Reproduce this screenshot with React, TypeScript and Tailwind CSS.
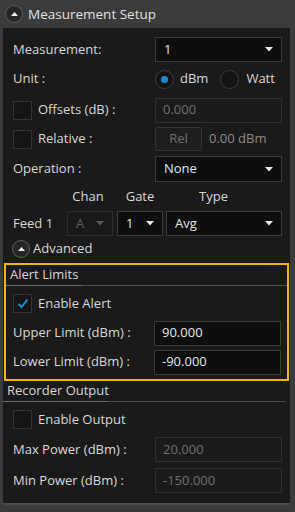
import React from 'react';

const Caret = ({ dim = false }: { dim?: boolean }) => (
    <svg width="8" height="5" viewBox="0 0 8 5" className="shrink-0">
        <path d="M0 0 L8 0 L4 4.5 Z" fill={dim ? '#5a5a5a' : '#e8e8e8'} />
    </svg>
);

const Select = ({ value, className = '', dim = false }: { value: string; className?: string; dim?: boolean }) => (
    <div
        className={`flex items-center justify-between border px-[8px] ${dim ? 'bg-[#191919] border-[#2c2c2c] text-[#5e5e5e]' : 'bg-[#0e0e0e] border-[#3a3a3a] text-[#e6e6e6]'} ${className}`}
    >
        <span>{value}</span>
        <Caret dim={dim} />
    </div>
);

const Field = ({ value, disabled = false }: { value: string; disabled?: boolean }) => (
    <div
        className={`w-[127px] h-[25px] flex items-center border px-[7px] ${disabled ? 'bg-[#1b1b1b] border-[#2f2f2f] text-[#6f6f6f]' : 'bg-[#0e0e0e] border-[#3a3a3a] text-[#e6e6e6]'}`}
    >
        {value}
    </div>
);

const Check = ({ checked = false }: { checked?: boolean }) => (
    <div className="w-[19px] h-[19px] bg-[#151515] border border-[#343434] flex items-center justify-center shrink-0">
        {checked && (
            <svg width="12" height="11" viewBox="0 0 12 11">
                <path d="M1.5 6 L4.5 9 L10.5 1.5" stroke="#1e8fd6" strokeWidth="2" fill="none" />
            </svg>
        )}
    </div>
);

const Radio = ({ on = false }: { on?: boolean }) => (
    <div className="w-[19px] h-[19px] rounded-full bg-[#141414] border border-[#3c3c3c] flex items-center justify-center shrink-0">
        {on && <div className="w-[7px] h-[7px] rounded-full bg-[#1d8ad0]" />}
    </div>
);

const CircleUp = () => (
    <div className="w-[18px] h-[18px] rounded-full bg-[#262626] border border-[#5c5c5c] flex items-center justify-center shrink-0">
        <svg width="7" height="4" viewBox="0 0 7 4">
            <path d="M0 4 L7 4 L3.5 0 Z" fill="#f0f0f0" />
        </svg>
    </div>
);

const SectionTitle = ({ text, tab }: { text: string; tab: string }) => (
    <div className="h-[21px] flex flex-col">
        <div className="flex-1 flex items-center pl-[4px] text-[#d6d6d6]">{text}</div>
        <div className="flex h-px">
            <div className={`${tab} bg-[#6a6a6a]`} />
            <div className="flex-1 bg-[#4c4c4c]" />
        </div>
    </div>
);

export default function App() {
    return (
        <div
            className="w-[295px] h-[512px] bg-[#3b3b3b] text-[13px] text-[#d8d8d8] overflow-hidden"
            style={{ fontFamily: '"Open Sans", "Liberation Sans", sans-serif' }}
        >
            {/* Header */}
            <div className="h-[28px] flex items-center pl-[5px] gap-[5px]">
                <CircleUp />
                <span className="text-[#e0e0e0] text-[13.5px]">Measurement Setup</span>
            </div>

            {/* Panel */}
            <div className="ml-[3px] w-[287px] h-[477px] bg-[#1a1a1a] border-b-2 border-[#4a4a4a] flex flex-col">
                <div className="pl-[10px] pr-[8px] pt-[9px] flex flex-col">
                    <div className="h-[25px] flex items-center justify-between">
                        <span>Measurement:</span>
                        <Select value="1" className="w-[127px] h-[25px]" />
                    </div>

                    <div className="mt-[8px] h-[18px] flex items-center justify-between">
                        <span>Unit :</span>
                        <div className="w-[127px] flex items-center">
                            <Radio on />
                            <span className="ml-[6px]">dBm</span>
                            <div className="ml-[12px]"><Radio /></div>
                            <span className="ml-[7px]">Watt</span>
                        </div>
                    </div>

                    <div className="mt-[10px] h-[24px] flex items-center justify-between">
                        <div className="flex items-center gap-[6px]">
                            <Check />
                            <span>Offsets (dB) :</span>
                        </div>
                        <Field value="0.000" disabled />
                    </div>

                    <div className="mt-[5px] h-[24px] flex items-center justify-between">
                        <div className="flex items-center gap-[6px]">
                            <Check />
                            <span>Relative :</span>
                        </div>
                        <div className="w-[127px] flex items-center">
                            <div className="w-[47px] h-[24px] bg-[#1e1e1e] border border-[#333] rounded-[2px] flex items-center justify-center text-[#707070]">
                                Rel
                            </div>
                            <span className="ml-[7px] text-[#8a8a8a]">0.00 dBm</span>
                        </div>
                    </div>

                    <div className="mt-[5px] h-[26px] flex items-center justify-between">
                        <span>Operation :</span>
                        <Select value="None" className="w-[127px] h-[26px]" />
                    </div>

                    <div className="mt-[7px] h-[16px] flex items-center">
                        <span className="ml-[52px] w-[46px] text-center">Chan</span>
                        <span className="ml-[6px] w-[46px] text-center">Gate</span>
                        <span className="ml-[36px]">Type</span>
                    </div>

                    <div className="mt-[6px] h-[25px] flex items-center">
                        <span className="w-[54px]">Feed 1</span>
                        <Select value="A" dim className="w-[46px] h-[25px]" />
                        <Select value="1" className="ml-[4px] w-[46px] h-[25px]" />
                        <Select value="Avg" className="ml-[3px] w-[116px] h-[25px]" />
                    </div>

                    <div className="mt-[4px] h-[18px] flex items-center gap-[3px] -ml-[1px]">
                        <CircleUp />
                        <span>Advanced</span>
                    </div>
                </div>

                {/* Alert Limits */}
                <div className="mt-[5px] ml-[1px] w-[285px] h-[118px] border-2 border-[#f2b705] flex flex-col">
                    <SectionTitle text="Alert Limits" tab="w-[76px]" />
                    <div className="pl-[7px] pr-[6px] flex flex-col">
                        <div className="mt-[8px] h-[19px] flex items-center gap-[6px]">
                            <Check checked />
                            <span>Enable Alert</span>
                        </div>
                        <div className="mt-[8px] h-[24px] flex items-center justify-between">
                            <span>Upper Limit (dBm) :</span>
                            <Field value="90.000" />
                        </div>
                        <div className="mt-[5px] h-[24px] flex items-center justify-between">
                            <span>Lower Limit (dBm) :</span>
                            <Field value="-90.000" />
                        </div>
                    </div>
                </div>

                {/* Recorder Output */}
                <div className="pr-[4px]">
                    <SectionTitle text="Recorder Output" tab="w-[105px]" />
                </div>
                <div className="pl-[10px] pr-[8px] flex flex-col">
                    <div className="mt-[8px] h-[19px] flex items-center gap-[6px]">
                        <Check />
                        <span>Enable Output</span>
                    </div>
                    <div className="mt-[8px] h-[25px] flex items-center justify-between">
                        <span>Max Power (dBm) :</span>
                        <Field value="20.000" disabled />
                    </div>
                    <div className="mt-[6px] h-[25px] flex items-center justify-between">
                        <span>Min Power (dBm) :</span>
                        <Field value="-150.000" disabled />
                    </div>
                </div>
            </div>
        </div>
    );
}
